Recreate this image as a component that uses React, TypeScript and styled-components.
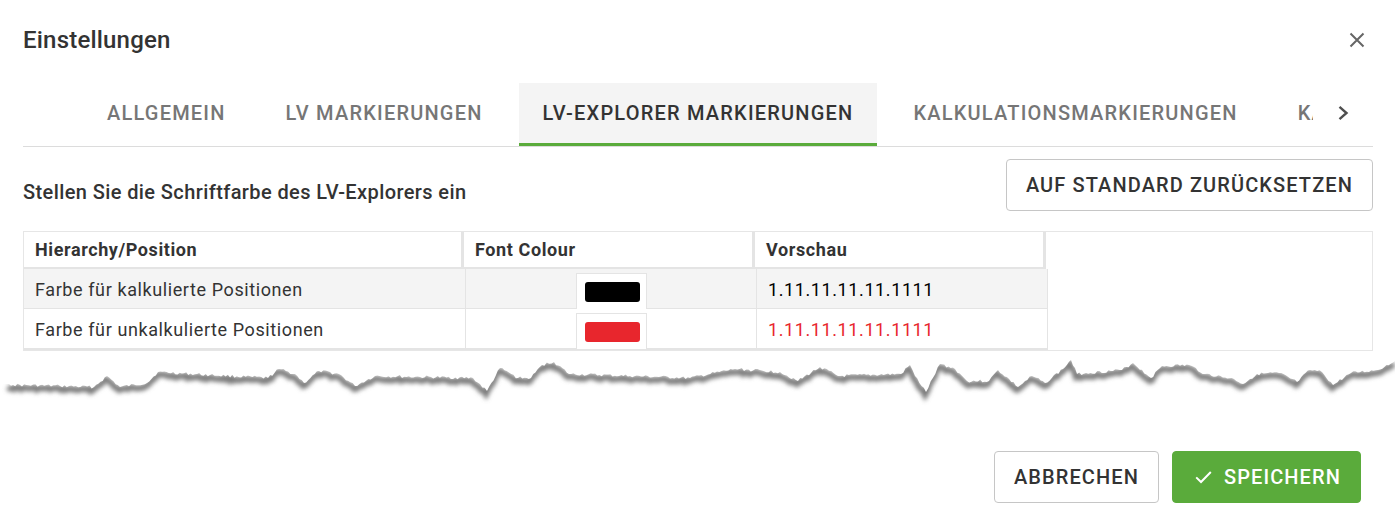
import React from "react";
import styled, { createGlobalStyle } from "styled-components";

const GlobalStyle = createGlobalStyle`
  * { box-sizing: border-box; }
  body {
    margin: 0;
    background: #fff;
    color: #333;
    font-family: Roboto, "Liberation Sans", Arial, sans-serif;
  }
`;

const tabs = [
  "Allgemein",
  "LV Markierungen",
  "LV-Explorer Markierungen",
  "Kalkulationsmarkierungen",
  "Kalkulationsvorlagen",
];
const activeTab = 2;

const rows = [
  { label: "Farbe für kalkulierte Positionen", color: "#000000", shaded: true },
  { label: "Farbe für unkalkulierte Positionen", color: "#e8262d", shaded: false },
];

// torn paper edge, rough outline of the cut (x, y on the page)
const tearOutline: [number, number][] = [
  [9, 384], [13, 385], [60, 386], [94, 387], [107, 376], [120, 387], [147, 383],
  [158, 372], [210, 375], [268, 378], [279, 369], [295, 374], [304, 383], [319, 371],
  [339, 374], [355, 386], [375, 376], [420, 377], [473, 378], [487, 391], [500, 368],
  [518, 378], [531, 378], [542, 365], [554, 362], [569, 374], [630, 376], [690, 378],
  [735, 369], [780, 372], [798, 381], [820, 367], [838, 376], [901, 374], [910, 365],
  [915, 376], [926, 392], [940, 364], [955, 369], [967, 381], [989, 381], [998, 370],
  [1018, 387], [1032, 376], [1045, 383], [1063, 369], [1071, 360], [1077, 374],
  [1086, 373], [1122, 370], [1133, 363], [1151, 378], [1162, 366], [1189, 365],
  [1205, 374], [1234, 379], [1243, 384], [1257, 374], [1279, 373], [1297, 382],
  [1310, 370], [1322, 372], [1333, 385], [1351, 373], [1378, 370], [1395, 361],
];

const TEAR_TOP = 351;

function buildTear() {
  let seed = 17;
  const rand = () => {
    seed = (seed * 9301 + 49297) % 233280;
    return seed / 233280;
  };
  const pts: string[] = [];
  for (let i = 0; i < tearOutline.length - 1; i++) {
    const [x0, y0] = tearOutline[i];
    const [x1, y1] = tearOutline[i + 1];
    const steps = Math.max(1, Math.round((x1 - x0) / 2.2));
    for (let s = 0; s < steps; s++) {
      const t = s / steps;
      const jitter = s === 0 ? 0 : (rand() - 0.5) * 3;
      pts.push(`${(x0 + (x1 - x0) * t).toFixed(1)} ${(y0 + (y1 - y0) * t + jitter - TEAR_TOP).toFixed(1)}`);
    }
  }
  const last = tearOutline[tearOutline.length - 1];
  pts.push(`${last[0]} ${last[1] - TEAR_TOP}`);
  const line = "M" + pts.join(" L");
  const cover = `M0 0 L0 ${tearOutline[0][1] - TEAR_TOP} L${pts.join(" L")} L1395 0 Z`;
  return { line, cover };
}

const tear = buildTear();

const TornEdge = () => (
  <TearSvg width="1395" height="64" viewBox="0 0 1395 64">
    <defs>
      <filter id="tear-shadow" x="-5%" y="-50%" width="110%" height="200%">
        <feGaussianBlur stdDeviation="2.2" />
      </filter>
    </defs>
    <path
      d={tear.line}
      transform="translate(-1 3)"
      fill="none"
      stroke="#7c7c7c"
      strokeWidth="6"
      filter="url(#tear-shadow)"
    />
    <path d={tear.cover} fill="#fff" />
  </TearSvg>
);

const CloseIcon = () => (
  <svg width="16" height="16" viewBox="0 0 16 16">
    <path d="M1.5 1.5 L14.5 14.5 M14.5 1.5 L1.5 14.5" stroke="#666" strokeWidth="2" />
  </svg>
);

const ChevronIcon = () => (
  <svg width="12" height="16" viewBox="0 0 12 16">
    <polyline points="2.5,1.8 9.5,8 2.5,14.2" fill="none" stroke="#4f4f4f" strokeWidth="2.4" />
  </svg>
);

const CheckIcon = () => (
  <svg width="17" height="14" viewBox="0 0 17 14">
    <polyline points="1.2,7.4 6,12 15.8,2" fill="none" stroke="#fff" strokeWidth="2" />
  </svg>
);

export default function App() {
  return (
    <>
      <GlobalStyle />
      <Dialog>
        <Header>
          <Title>Einstellungen</Title>
          <CloseButton aria-label="Schließen">
            <CloseIcon />
          </CloseButton>
        </Header>

        <TabBar>
          <Pager />
          <TabScroller>
            {tabs.map((t, i) => (
              <Tab key={t} $active={i === activeTab}>
                {t}
              </Tab>
            ))}
          </TabScroller>
          <Pager>
            <ChevronIcon />
          </Pager>
        </TabBar>

        <Toolbar>
          <Subtitle>Stellen Sie die Schriftfarbe des LV-Explorers ein</Subtitle>
          <OutlineButton>Auf Standard zurücksetzen</OutlineButton>
        </Toolbar>

        <TableFrame>
          <HeadRow>
            <HeadCell>Hierarchy/Position</HeadCell>
            <HeadCell>Font Colour</HeadCell>
            <HeadCell>Vorschau</HeadCell>
          </HeadRow>
          {rows.map((r, i) => (
            <BodyRow key={r.label} $shaded={r.shaded} $last={i === rows.length - 1}>
              <Cell>{r.label}</Cell>
              <SwatchCell>
                <SwatchBox>
                  <Swatch $color={r.color} />
                </SwatchBox>
              </SwatchCell>
              <Cell $color={r.color}>1.11.11.11.11.1111</Cell>
            </BodyRow>
          ))}
        </TableFrame>
      </Dialog>

      <TornEdge />

      <Footer>
        <OutlineButton>Abbrechen</OutlineButton>
        <PrimaryButton>
          <CheckIcon />
          Speichern
        </PrimaryButton>
      </Footer>
    </>
  );
}

const Dialog = styled.div`
  padding: 0 22px 0 23px;
`;

const Header = styled.div`
  height: 80px;
  margin-bottom: 3px;
  display: flex;
  align-items: center;
  justify-content: space-between;
`;

const Title = styled.h2`
  margin: 0;
  font-size: 24px;
  font-weight: 500;
  letter-spacing: 0.2px;
  color: #333;
`;

const CloseButton = styled.button`
  width: 26px;
  height: 26px;
  margin-right: 3px;
  padding: 0;
  border: 0;
  background: none;
  display: flex;
  align-items: center;
  justify-content: center;
`;

const TabBar = styled.div`
  display: flex;
  height: 64px;
  border-bottom: 1px solid #dcdcdc;
`;

const Pager = styled.div`
  flex: 0 0 60px;
  display: flex;
  align-items: center;
  justify-content: center;
  padding-bottom: 3px;
`;

const TabScroller = styled.div`
  flex: 1;
  display: flex;
  gap: 12px;
  overflow: hidden;
`;

const Tab = styled.div<{ $active: boolean }>`
  flex: 0 0 auto;
  height: 63px;
  padding: 0 24px;
  display: flex;
  align-items: center;
  font-size: 20px;
  font-weight: 500;
  letter-spacing: 1.2px;
  text-transform: uppercase;
  color: ${(p) => (p.$active ? "#333" : "#767676")};
  background: ${(p) => (p.$active ? "#f4f4f4" : "transparent")};
  border-bottom: 3px solid ${(p) => (p.$active ? "#5aab3b" : "transparent")};
`;

const Toolbar = styled.div`
  margin-top: 12px;
  display: flex;
  align-items: center;
  justify-content: space-between;
`;

const Subtitle = styled.div`
  padding-top: 14px;
  font-size: 20px;
  font-weight: 500;
  letter-spacing: 0.4px;
  color: #333;
`;

const OutlineButton = styled.button`
  height: 52px;
  padding: 0 19px;
  border: 1px solid #c6c6c6;
  border-radius: 4px;
  background: #fff;
  font-family: Roboto, "Liberation Sans", Arial, sans-serif;
  font-size: 20px;
  font-weight: 500;
  letter-spacing: 1.1px;
  text-transform: uppercase;
  color: #333;
`;

const PrimaryButton = styled(OutlineButton)`
  display: flex;
  align-items: center;
  gap: 12px;
  padding: 0 19px 0 22px;
  border-color: #5aab3b;
  background: #5aab3b;
  color: #fff;
`;

const TableFrame = styled.div`
  margin-top: 20px;
  height: 120px;
  border: 1px solid #e6e6e6;
`;

const HeadRow = styled.div`
  display: grid;
  grid-template-columns: 440px 291px 291px;
  width: 1022px;
  height: 37px;
  border-bottom: 2px solid #e4e4e4;
`;

const HeadCell = styled.div`
  display: flex;
  align-items: center;
  padding-left: 11px;
  border-right: 3px solid #e4e4e4;
  font-size: 18px;
  font-weight: 700;
  letter-spacing: 0.6px;
  color: #333;
`;

const BodyRow = styled.div<{ $shaded: boolean; $last: boolean }>`
  display: grid;
  grid-template-columns: 442px 291px 291px;
  width: 1024px;
  height: ${(p) => (p.$last ? 41 : 40)}px;
  background: ${(p) => (p.$shaded ? "#f4f4f4" : "#fff")};
  border-bottom: ${(p) => (p.$last ? 2 : 1)}px solid #e4e4e4;
`;

const Cell = styled.div<{ $color?: string }>`
  display: flex;
  align-items: center;
  padding-left: 11px;
  border-right: 1px solid #e4e4e4;
  font-size: 18px;
  letter-spacing: 0.6px;
  color: ${(p) => p.$color ?? "#333"};
`;

const SwatchCell = styled.div`
  display: flex;
  justify-content: center;
  align-items: flex-start;
  padding-top: 4px;
  border-right: 1px solid #e4e4e4;
`;

const SwatchBox = styled.div`
  width: 71px;
  height: 36px;
  padding: 8px 0 0 8px;
  background: #fff;
  border: 1px solid #e4e4e4;
  border-bottom: 0;
`;

const Swatch = styled.div<{ $color: string }>`
  width: 55px;
  height: 20px;
  border-radius: 3px;
  background: ${(p) => p.$color};
`;

const TearSvg = styled.svg`
  display: block;
`;

const Footer = styled.div`
  padding: 36px 34px 0 0;
  display: flex;
  justify-content: flex-end;
  gap: 13px;
`;
